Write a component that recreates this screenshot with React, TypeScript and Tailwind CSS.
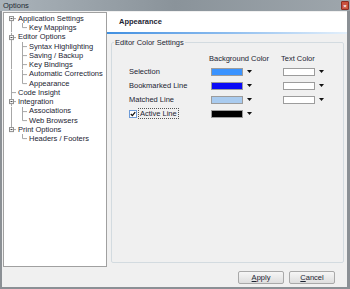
import React from 'react';

type Node = { label: string; children?: string[] };

const tree: Node[] = [
  { label: 'Application Settings', children: ['Key Mappings'] },
  {
    label: 'Editor Options',
    children: ['Syntax Highlighting', 'Saving / Backup', 'Key Bindings', 'Automatic Corrections', 'Appearance'],
  },
  { label: 'Code Insight' },
  { label: 'Integration', children: ['Associations', 'Web Browsers'] },
  { label: 'Print Options', children: ['Headers / Footers'] },
];

const LINE = '#a7a7a7';

function RootCell({ first, last, hasChildren }: { first: boolean; last: boolean; hasChildren: boolean }) {
  return (
    <svg width="14" height="9.25" viewBox="0 0 14 9.25" className="shrink-0">
      <line x1="7.5" y1={first ? 4.6 : 0} x2="7.5" y2={last ? 4.6 : 9.25} stroke={LINE} strokeWidth="1" />
      <line x1="7.5" y1="4.6" x2="12" y2="4.6" stroke={LINE} strokeWidth="1" />
      {hasChildren && (
        <>
          <rect x="5.5" y="2.6" width="4" height="4" fill="white" stroke="#8f8f8f" strokeWidth="1" />
          <line x1="6.5" y1="4.6" x2="8.5" y2="4.6" stroke="#404040" strokeWidth="1" />
        </>
      )}
    </svg>
  );
}

function ChildCells({ rootContinues, last }: { rootContinues: boolean; last: boolean }) {
  return (
    <svg width="25" height="9.25" viewBox="0 0 25 9.25" className="shrink-0">
      {rootContinues && <line x1="7.5" y1="0" x2="7.5" y2="9.25" stroke={LINE} strokeWidth="1" />}
      <line x1="18.5" y1="0" x2="18.5" y2={last ? 4.6 : 9.25} stroke={LINE} strokeWidth="1" />
      <line x1="18.5" y1="4.6" x2="23" y2="4.6" stroke={LINE} strokeWidth="1" />
    </svg>
  );
}

function Arrow() {
  return (
    <svg width="5" height="3" viewBox="0 0 5 3" className="ml-[4px] shrink-0">
      <path d="M0 0 H5 L2.5 3 Z" fill="#111" />
    </svg>
  );
}

function Swatch({ color }: { color: string }) {
  return (
    <div className="flex items-center">
      <div className="ml-[2px] h-[8px] w-[32px] border border-[#9c9c9c]" style={{ backgroundColor: color }} />
      <Arrow />
    </div>
  );
}

const rows = [
  { label: 'Selection', bg: '#3a93ff', text: '#ffffff' },
  { label: 'Bookmarked Line', bg: '#0a0af5', text: '#ffffff' },
  { label: 'Matched Line', bg: '#a9cbef', text: '#ffffff' },
];

export default function App() {
  return (
    <div className="flex h-[289px] w-[350px] flex-col overflow-hidden bg-[#f0f0f0] font-['Liberation_Sans',Arial,sans-serif] text-[7.5px] leading-none text-[#1c2433]">
      {/* title bar */}
      <div className="flex h-[11px] shrink-0 items-center justify-between bg-gradient-to-r from-[#aab3ba] via-[#8a939a] to-[#9ea6ac] pl-[3px] pr-[1px]">
        <span className="text-[7.5px] text-[#1e2a33]">Options</span>
        <div className="flex h-[9px] w-[8px] items-center justify-center rounded-[1px] border border-[#8a2e22] bg-[#c9513d] text-[6px] font-bold leading-none text-white">
          ×
        </div>
      </div>

      <div className="flex flex-1 flex-col border-b-2 border-l-2 border-r-[3px] border-[#8b9095]">
        <div className="mt-[1px] flex h-[255px]">
          {/* tree */}
          <div className="ml-[1px] w-[104px] shrink-0 border border-[#a0a0a0] bg-white pt-[1px]">
            {tree.map((node, i) => {
              const lastRoot = i === tree.length - 1;
              return (
                <div key={node.label}>
                  <div className="flex h-[9.25px] items-center">
                    <RootCell first={i === 0} last={lastRoot} hasChildren={!!node.children} />
                    <span className="whitespace-nowrap">{node.label}</span>
                  </div>
                  {node.children?.map((child, j) => (
                    <div key={child} className="flex h-[9.25px] items-center">
                      <ChildCells rootContinues={!lastRoot} last={j === node.children!.length - 1} />
                      <span className="whitespace-nowrap">{child}</span>
                    </div>
                  ))}
                </div>
              );
            })}
          </div>

          {/* right panel */}
          <div className="flex flex-1 flex-col">
            <div className="flex h-[20px] items-center bg-white pl-[12px] font-bold">Appearance</div>
            <div className="h-[2px] bg-gradient-to-r from-[#3f8fe0] via-[#8cbcee] to-[#e4f0fb]" />
            <div className="flex flex-1 px-[3px] pb-[4px] pl-[4px] pt-[5px]">
              <fieldset className="flex-1 rounded-[2px] border border-[#d3dbe0] px-0 pb-0">
                <legend className="ml-[2px] px-[1px]">Editor Color Settings</legend>
                <div className="mt-[6px] flex h-[12px] items-center">
                  <span className="ml-[97px] w-[72px]">Background Color</span>
                  <span>Text Color</span>
                </div>
                {rows.map((r) => (
                  <div key={r.label} className="flex h-[14px] items-center">
                    <span className="ml-[17px] w-[80px]">{r.label}</span>
                    <div className="w-[72px]">
                      <Swatch color={r.bg} />
                    </div>
                    <Swatch color={r.text} />
                  </div>
                ))}
                <div className="flex h-[14px] items-center">
                  <div className="ml-[17px] flex w-[80px] items-center">
                    <div className="flex h-[8px] w-[8px] items-center justify-center border border-[#6d9bd8] bg-white">
                      <svg width="6" height="6" viewBox="0 0 6 6">
                        <path d="M0.8 3 L2.4 4.6 L5.2 1.2" fill="none" stroke="#111" strokeWidth="1.3" />
                      </svg>
                    </div>
                    <span className="ml-[1px] border border-dotted border-[#555] px-[1px] py-[1px]">Active Line</span>
                  </div>
                  <Swatch color="#000000" />
                </div>
              </fieldset>
            </div>
          </div>
        </div>

        {/* buttons */}
        <div className="mt-[4px] flex justify-end gap-[5px] pr-[12px]">
          <button className="flex h-[13px] w-[46px] items-center justify-center rounded-[2px] border border-[#a9a9a9] bg-gradient-to-b from-[#f6f6f6] to-[#dedede]">
            <span>
              <span className="underline">A</span>pply
            </span>
          </button>
          <button className="flex h-[13px] w-[46px] items-center justify-center rounded-[2px] border border-[#a9a9a9] bg-gradient-to-b from-[#f6f6f6] to-[#dedede]">
            <span>
              <span className="underline">C</span>ancel
            </span>
          </button>
        </div>
      </div>
    </div>
  );
}
